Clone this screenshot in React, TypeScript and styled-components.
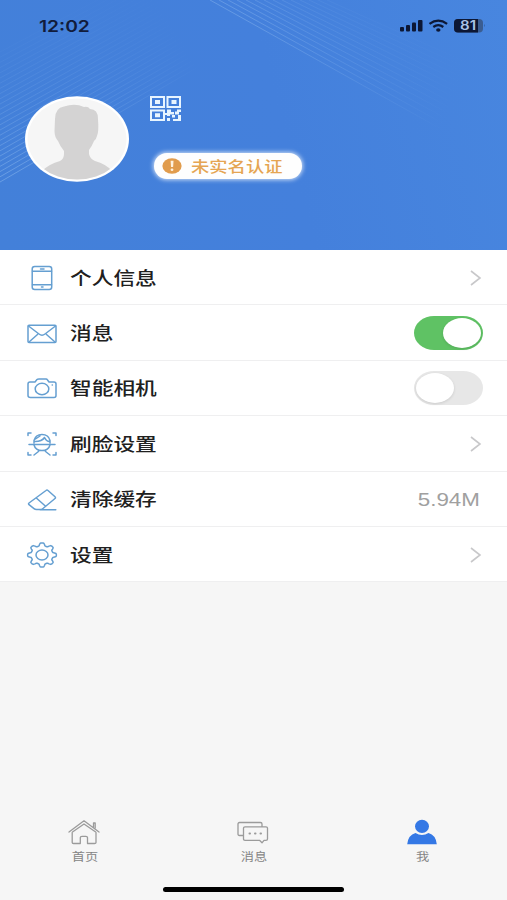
import React from 'react';
import styled, { createGlobalStyle } from 'styled-components';

const GlobalStyle = createGlobalStyle`
  * { box-sizing: border-box; }
  body { margin: 0; background: #f6f6f6; }
`;

const Screen = styled.main`
  width: 507px;
  height: 900px;
  display: flex;
  flex-direction: column;
  overflow: hidden;
  background: #f6f6f6;
  font-family: 'Liberation Sans', 'Noto Sans CJK SC', sans-serif;
`;

const Header = styled.header`
  position: relative;
  height: 250px;
  flex: none;
  background: linear-gradient(75deg, #4380d9 0%, #4480dc 55%, #4886df 100%);
`;

const HeaderPattern = styled.svg`
  position: absolute;
  inset: 0;
`;

const StatusBar = styled.div`
  position: relative;
  display: flex;
  align-items: center;
  justify-content: space-between;
  height: 52px;
  padding: 0 22px 0 39px;
`;

const Clock = styled.span`
  font: 600 16px/20px Inter, sans-serif;
  color: #111c3c;
  transform: scaleX(1.2);
  transform-origin: left;
`;

const Profile = styled.div`
  position: relative;
  display: flex;
  gap: 21px;
  padding: 44px 0 0 24px;
`;

const ProfileInfo = styled.div`
  display: flex;
  flex-direction: column;
  align-items: flex-start;
  gap: 31px;
`;

const VerifyBadge = styled.div`
  display: flex;
  align-items: center;
  gap: 9px;
  width: 148px;
  height: 26px;
  margin-left: 4px;
  padding-left: 8px;
  border-radius: 13px;
  background: #fefefe;
  box-shadow: 0 0 4px 1px #ffffffb8;
`;

const BadgeText = styled.span`
  font: 500 15px/22px 'Noto Sans CJK SC', sans-serif;
  color: #e5a553;
  transform: scaleX(1.22);
  transform-origin: left;
  white-space: nowrap;
`;

const List = styled.section`
  display: grid;
  grid-template-rows: repeat(6, 55.4px);
  background: #fff;
`;

const Row = styled.div`
  display: flex;
  align-items: center;
  padding: 0 24px 0 26px;
  border-bottom: 1.5px solid #efeff0;
`;

const RowLabel = styled.span`
  margin: 0 0 1px 12px;
  flex: 1;
  font: 500 17.8px/26px 'Noto Sans CJK SC', sans-serif;
  color: #202020;
  white-space: nowrap;

  & > span {
    display: inline-block;
    transform: scaleX(1.22);
    transform-origin: left;
  }
`;

const CacheSize = styled.span`
  margin: 2px 3px 0 0;
  font: 400 17.6px/24px 'Liberation Sans', sans-serif;
  color: #a0a0a0;
  transform: scaleX(1.27);
  transform-origin: right;
`;

const Toggle = styled.div<{ $on: boolean }>`
  display: flex;
  justify-content: ${p => (p.$on ? 'flex-end' : 'flex-start')};
  align-items: center;
  width: 69px;
  height: 34px;
  padding: 0 2px;
  border-radius: 20px / 17px;
  background: ${p => (p.$on ? '#5fc264' : '#e7e7e7')};
`;

const Knob = styled.div`
  width: 38px;
  height: 30px;
  border-radius: 50%;
  background: #fff;
  box-shadow: 0 1px 3px #0000001f;
`;

const TabBar = styled.nav`
  display: grid;
  grid-template-columns: repeat(3, 1fr);
  margin-top: auto;
  height: 69px;
`;

const Tab = styled.div`
  display: flex;
  flex-direction: column;
  align-items: center;
`;

const TabLabel = styled.span`
  margin-top: 1px;
  font: 400 11px/20px 'Noto Sans CJK SC', sans-serif;
  color: #858585;
  transform: scaleX(1.2);
`;

const HomeIndicator = styled.div`
  width: 181px;
  height: 5px;
  margin: 0 auto 8px;
  border-radius: 3px;
  background: #000;
`;

const range = (n: number) => Array.from({ length: n }, (_, i) => i);

const Pattern = () => (
  <HeaderPattern width="507" height="250" viewBox="0 0 507 250" fill="none">
    <defs>
      <linearGradient id="leftFade" x1="0" y1="150" x2="190" y2="50" gradientUnits="userSpaceOnUse">
        <stop stopColor="#9cc5f2" stopOpacity=".42" />
        <stop offset="1" stopColor="#9cc5f2" stopOpacity="0" />
      </linearGradient>
      <linearGradient id="rightFade" x1="250" y1="20" x2="450" y2="115" gradientUnits="userSpaceOnUse">
        <stop stopColor="#9cc5f2" stopOpacity=".36" />
        <stop offset="1" stopColor="#9cc5f2" stopOpacity="0" />
      </linearGradient>
    </defs>
    {range(26).map(i => (
      <path key={i} d={`M0 ${182 - i * 5.2}L210 ${60 - i * 4.8}`} stroke="url(#leftFade)" strokeWidth="1" opacity={1 - i / 28} />
    ))}
    {range(14).map(i => (
      <path key={i} d={`M${210 + i * 9} 0L${450 + i * 6} ${134 - i * 3.4}`} stroke="url(#rightFade)" strokeWidth="1" opacity={1 - i / 17} />
    ))}
  </HeaderPattern>
);

const StatusIcons = () => (
  <svg width="86" height="16" viewBox="0 0 86 16">
    <g fill="#0c1735">
      <rect x="1" y="9" width="4" height="4.5" rx="1" />
      <rect x="7" y="7" width="4" height="6.5" rx="1" />
      <rect x="13" y="4.5" width="4" height="9" rx="1" />
      <rect x="19" y="2" width="4.5" height="11.5" rx="1" />
      <rect x="55" y="1" width="29" height="13.5" rx="4" fill="#3a5d92" />
      <path d="M59 1H79V14.5H59Q55 14.5 55 10.5V5Q55 1 59 1Z" />
      <path d="M85 6Q86.5 7.5 85 9Z" fill="#315f9f" />
      <ellipse cx="39.3" cy="12" rx="2.2" ry="1.7" />
    </g>
    <g fill="none" stroke="#0c1735" strokeWidth="2.2">
      <path d="M30.5 5.8Q39.3-.7 48.1 5.8" />
      <path d="M34.3 9Q39.3 5.2 44.3 9" />
    </g>
    <text x="61" y="12.3" fontFamily="Inter" fontWeight="600" fontSize="12.5" textLength="16" lengthAdjust="spacingAndGlyphs" fill="#a9c2e6">81</text>
  </svg>
);

const Avatar = () => (
  <svg width="105" height="86" viewBox="0 0 105 86">
    <defs>
      <clipPath id="avatarClip"><ellipse cx="53" cy="43" rx="49.5" ry="40.5" /></clipPath>
    </defs>
    <ellipse cx="53" cy="43" rx="52" ry="42.7" fill="#fff" />
    <g clipPath="url(#avatarClip)">
      <rect width="105" height="86" fill="#f6f6f6" />
      <path d="M18 75Q25 68 36 65Q40 63 40 58V55Q36 50 34 45Q30.5 41 30.5 35L31 23Q31 12 40 10.5Q51 7 60 11Q64 10 66 13Q74 13 74 23Q75 36 73 40Q72 44 70 45Q68 50 65 54V58Q66 63 71 65Q82 68 88 75L84 78Q69 84 53 84Q34 84 22 78Z" fill="#d4d3d3" />
    </g>
  </svg>
);

const QrIcon = () => (
  <svg width="32" height="26" viewBox="0 0 32 26" fill="#e8f5ff">
    <path fillRule="evenodd" d="M0 0H15V12H0ZM2 2V10H13V2ZM16.5 0H31V12H16.5ZM18.5 2V10H29V2ZM0 13.5H15V25H0ZM2 15.5V23H13V15.5Z" />
    <path d="M5 4H10V8H5ZM21.5 4H26.5V8H21.5ZM5 17.3H10V21.3H5ZM17 13.5H21V16H24V18.5H20V20H17ZM27 13.5H31V16H29V18.5H25V15.5H27ZM17 22H20V25H17ZM22 19H25V21.5H22ZM28 19H31V25H23V23H28ZM13 17H17V19H13Z" />
  </svg>
);

const WarnIcon = () => (
  <svg width="20" height="16" viewBox="0 0 20 16">
    <ellipse cx="10" cy="8" rx="9.6" ry="7.8" fill="#e19c4d" />
    <path d="M8.6 2.8H11.5L11.1 9H9Z" fill="#fff2df" />
    <ellipse cx="10" cy="11.7" rx="1.4" ry="1.2" fill="#fff2df" />
  </svg>
);

const LineIcon = styled.svg.attrs({ width: 32, height: 28, viewBox: '0 0 32 28' })`
  flex: none;
  position: relative;
  top: 1px;
  fill: none;
  stroke: #659fd1;
  stroke-width: 1.5;
  stroke-linejoin: round;
  stroke-linecap: round;
`;

const PhoneIcon = () => (
  <LineIcon>
    <rect x="6.2" y="2.5" width="19.5" height="23" rx="2.5" />
    <path d="M6.5 7.2H25.5M6.5 20.7H25.5M14.5 4.9H18M15.5 23H17" />
  </LineIcon>
);
const MailIcon = () => (
  <LineIcon>
    <rect x="2" y="5.2" width="28" height="17.4" rx="1" />
    <path d="M2.5 6L13 14Q16 16.3 19 14L29.5 6M3 22L11.5 14.5M29 22L20.5 14.5" />
  </LineIcon>
);
const CameraIcon = () => (
  <LineIcon>
    <path d="M4 7H9L11 4.5Q11.5 4 13 4H20Q21 4 21.5 5L23 7H28Q30 7 30 9V20.5Q30 22.5 28 22.5H4.5Q2 22.5 2 20.5V9Q2 7 4 7Z" />
    <ellipse cx="16" cy="14" rx="6.8" ry="5.7" />
    <path d="M26.2 10H26.4" />
  </LineIcon>
);
const FaceIcon = () => (
  <LineIcon>
    <path d="M2 5.5V3H5M27 3H30V5.5M2 22.5V25H5M27 25H30V22.5" />
    <path d="M8 13V10.5Q9.5 4.5 16 4.5Q22.5 4.5 24 10.5V13M8 15Q9.5 20.5 16 20.5Q22.5 20.5 24 15M3 14.5H29M9 11.5Q16 11.5 18.5 7.5Q20 11 23 11.5M9.5 9L14 6M12.5 20V21.5L8 25M19.5 20V21.5L24 25" />
  </LineIcon>
);
const EraserIcon = () => (
  <LineIcon>
    <path d="M20 4.5Q21 3.7 22 4.5L29 10.8Q30 11.7 29 12.5L17 22.5Q15.6 23.7 13 23.5H10.5Q9 23.5 8 22.6L3 18.7Q2 17.8 3 17ZM10.3 12L19.3 20M14 23.7H29.8" />
  </LineIcon>
);

const gearPath = range(96).map(i => {
  const a = (i / 96) * Math.PI * 2;
  const r = 12.7 + 1.7 * Math.tanh(2.4 * Math.cos(8 * a));
  return `${i ? 'L' : 'M'}${(16 + r * Math.sin(a)).toFixed(2)} ${(14 - r * 0.84 * Math.cos(a)).toFixed(2)}`;
}).join('') + 'Z';

const GearIcon = () => (
  <LineIcon>
    <path d={gearPath} />
    <ellipse cx="16" cy="14" rx="6" ry="5" />
  </LineIcon>
);

const Chevron = () => (
  <svg width="14" height="20" viewBox="0 0 14 20" fill="none" stroke="#c8c8ca" strokeWidth="1.6">
    <path d="M2 4L11 11L2 18" />
  </svg>
);

const TabIcon = styled.svg.attrs({ width: 34, height: 27, viewBox: '0 0 34 27' })`
  margin-right: 1px;
  fill: none;
  stroke: #9b9b9b;
  stroke-width: 1.3;
  stroke-linejoin: round;
  stroke-linecap: round;
`;

const HomeIcon = () => (
  <TabIcon>
    <path d="M2 14L17 2.8L32 14M5.2 14.5V24.5Q5.2 25.5 6.5 25.5H13.3V19.5Q13.3 18.3 15 18.3H18.8Q20.5 18.3 20.5 19.5V25.5H27.5Q29 25.5 29 24.5V14.5M5.5 14L17 6L28.7 14M26.5 8.7V5H28.2V10" />
  </TabIcon>
);
const ChatIcon = () => (
  <TabIcon>
    <path d="M7 17.5H3.5Q2 17.5 2 16V6Q2 4.5 3.5 4.5H24.5Q26 4.5 26 6V8.8M9 8.8H30Q31.5 8.8 31.5 10V21Q31.5 22.3 30 22.3H28L26 24.8L23.5 22.3H9Q7.5 22.3 7.5 21V10Q7.5 8.8 9 8.8Z" />
    <path d="M13.5 15.5H14M19 15.5H19.5M24.5 15.5H25" strokeWidth="2" />
  </TabIcon>
);
const UserIcon = () => (
  <TabIcon>
    <g fill="#3478e5" stroke="none">
      <ellipse cx="17" cy="8.3" rx="7" ry="6.6" />
      <path d="M2.2 26.3Q3.2 17 10.5 15.1Q17 18.8 23.5 15.1Q30.8 17 31.8 26.3Z" />
    </g>
  </TabIcon>
);

const rows: { label: string; icon: React.ReactNode; end: React.ReactNode }[] = [
  { label: '个人信息', icon: <PhoneIcon />, end: <Chevron /> },
  { label: '消息', icon: <MailIcon />, end: <Toggle $on><Knob /></Toggle> },
  { label: '智能相机', icon: <CameraIcon />, end: <Toggle $on={false}><Knob /></Toggle> },
  { label: '刷脸设置', icon: <FaceIcon />, end: <Chevron /> },
  { label: '清除缓存', icon: <EraserIcon />, end: <CacheSize>5.94M</CacheSize> },
  { label: '设置', icon: <GearIcon />, end: <Chevron /> },
];

export default function App() {
  return (
    <Screen>
      <GlobalStyle />
      <Header>
        <Pattern />
        <StatusBar>
          <Clock>12:02</Clock>
          <StatusIcons />
        </StatusBar>
        <Profile>
          <Avatar />
          <ProfileInfo>
            <QrIcon />
            <VerifyBadge>
              <WarnIcon />
              <BadgeText>未实名认证</BadgeText>
            </VerifyBadge>
          </ProfileInfo>
        </Profile>
      </Header>
      <List>
        {rows.map(r => (
          <Row key={r.label}>
            {r.icon}
            <RowLabel><span>{r.label}</span></RowLabel>
            {r.end}
          </Row>
        ))}
      </List>
      <TabBar>
        <Tab><HomeIcon /><TabLabel>首页</TabLabel></Tab>
        <Tab><ChatIcon /><TabLabel>消息</TabLabel></Tab>
        <Tab><UserIcon /><TabLabel>我</TabLabel></Tab>
      </TabBar>
      <HomeIndicator />
    </Screen>
  );
}
